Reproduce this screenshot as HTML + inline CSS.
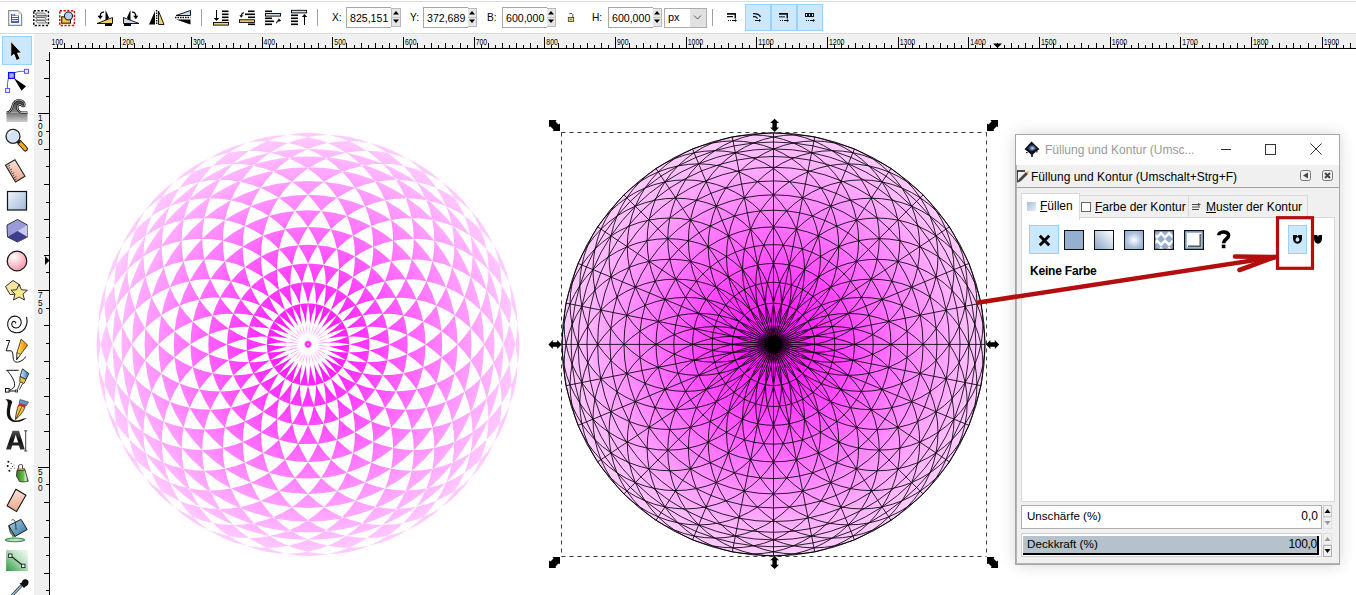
<!DOCTYPE html>
<html><head><meta charset="utf-8"><style>
body{margin:0;width:1356px;height:595px;overflow:hidden;background:#fff;font-family:"Liberation Sans",sans-serif;position:relative}
.a{position:absolute}
svg{position:absolute;left:0;top:0}
.t{position:absolute;white-space:nowrap;font-family:"Liberation Sans",sans-serif;color:#000}
#dlg{position:absolute;left:1015px;top:134px;width:323px;height:429px;border:1px solid #a6a6a6;background:#f0f0f0;box-shadow:0 0 14px rgba(0,0,0,0.16)}
.btnsel{position:absolute;background:#cce8ff;border:1px solid #99d1ff;box-sizing:border-box}

</style></head><body>
<svg width="1356" height="595"><defs><radialGradient id="g1" gradientUnits="userSpaceOnUse" cx="308" cy="344.4" r="211.5"><stop offset="0" stop-color="#f0f" stop-opacity="1"/><stop offset="1" stop-color="#f0f" stop-opacity="0.2"/></radialGradient><radialGradient id="g2" gradientUnits="userSpaceOnUse" cx="773.5" cy="344.4" r="211.5"><stop offset="0" stop-color="#f0f" stop-opacity="1"/><stop offset="1" stop-color="#f0f" stop-opacity="0.2"/></radialGradient></defs><path d="M519.50 344.40a105.75 105.75 0 1 0 -211.50 0a105.75 105.75 0 1 0 211.50 0zM517.47 365.03a105.75 105.75 0 1 0 -211.50 0a105.75 105.75 0 1 0 211.50 0zM511.45 384.87a105.75 105.75 0 1 0 -211.50 0a105.75 105.75 0 1 0 211.50 0zM501.68 403.15a105.75 105.75 0 1 0 -211.50 0a105.75 105.75 0 1 0 211.50 0zM488.53 419.18a105.75 105.75 0 1 0 -211.50 0a105.75 105.75 0 1 0 211.50 0zM472.50 432.33a105.75 105.75 0 1 0 -211.50 0a105.75 105.75 0 1 0 211.50 0zM454.22 442.10a105.75 105.75 0 1 0 -211.50 0a105.75 105.75 0 1 0 211.50 0zM434.38 448.12a105.75 105.75 0 1 0 -211.50 0a105.75 105.75 0 1 0 211.50 0zM413.75 450.15a105.75 105.75 0 1 0 -211.50 0a105.75 105.75 0 1 0 211.50 0zM393.12 448.12a105.75 105.75 0 1 0 -211.50 0a105.75 105.75 0 1 0 211.50 0zM373.28 442.10a105.75 105.75 0 1 0 -211.50 0a105.75 105.75 0 1 0 211.50 0zM355.00 432.33a105.75 105.75 0 1 0 -211.50 0a105.75 105.75 0 1 0 211.50 0zM338.97 419.18a105.75 105.75 0 1 0 -211.50 0a105.75 105.75 0 1 0 211.50 0zM325.82 403.15a105.75 105.75 0 1 0 -211.50 0a105.75 105.75 0 1 0 211.50 0zM316.05 384.87a105.75 105.75 0 1 0 -211.50 0a105.75 105.75 0 1 0 211.50 0zM310.03 365.03a105.75 105.75 0 1 0 -211.50 0a105.75 105.75 0 1 0 211.50 0zM308.00 344.40a105.75 105.75 0 1 0 -211.50 0a105.75 105.75 0 1 0 211.50 0zM310.03 323.77a105.75 105.75 0 1 0 -211.50 0a105.75 105.75 0 1 0 211.50 0zM316.05 303.93a105.75 105.75 0 1 0 -211.50 0a105.75 105.75 0 1 0 211.50 0zM325.82 285.65a105.75 105.75 0 1 0 -211.50 0a105.75 105.75 0 1 0 211.50 0zM338.97 269.62a105.75 105.75 0 1 0 -211.50 0a105.75 105.75 0 1 0 211.50 0zM355.00 256.47a105.75 105.75 0 1 0 -211.50 0a105.75 105.75 0 1 0 211.50 0zM373.28 246.70a105.75 105.75 0 1 0 -211.50 0a105.75 105.75 0 1 0 211.50 0zM393.12 240.68a105.75 105.75 0 1 0 -211.50 0a105.75 105.75 0 1 0 211.50 0zM413.75 238.65a105.75 105.75 0 1 0 -211.50 0a105.75 105.75 0 1 0 211.50 0zM434.38 240.68a105.75 105.75 0 1 0 -211.50 0a105.75 105.75 0 1 0 211.50 0zM454.22 246.70a105.75 105.75 0 1 0 -211.50 0a105.75 105.75 0 1 0 211.50 0zM472.50 256.47a105.75 105.75 0 1 0 -211.50 0a105.75 105.75 0 1 0 211.50 0zM488.53 269.62a105.75 105.75 0 1 0 -211.50 0a105.75 105.75 0 1 0 211.50 0zM501.68 285.65a105.75 105.75 0 1 0 -211.50 0a105.75 105.75 0 1 0 211.50 0zM511.45 303.93a105.75 105.75 0 1 0 -211.50 0a105.75 105.75 0 1 0 211.50 0zM517.47 323.77a105.75 105.75 0 1 0 -211.50 0a105.75 105.75 0 1 0 211.50 0zM503.40 344.40a195.40 195.40 0 1 0 -390.80 0a195.40 195.40 0 1 0 390.80 0zM494.53 344.40a186.53 186.53 0 1 0 -373.05 0a186.53 186.53 0 1 0 373.05 0zM483.86 344.40a175.86 175.86 0 1 0 -351.71 0a175.86 175.86 0 1 0 351.71 0zM471.49 344.40a163.49 163.49 0 1 0 -326.98 0a163.49 163.49 0 1 0 326.98 0zM457.55 344.40a149.55 149.55 0 1 0 -299.11 0a149.55 149.55 0 1 0 299.11 0zM442.17 344.40a134.17 134.17 0 1 0 -268.35 0a134.17 134.17 0 1 0 268.35 0zM425.50 344.40a117.50 117.50 0 1 0 -235.01 0a117.50 117.50 0 1 0 235.01 0zM407.70 344.40a99.70 99.70 0 1 0 -199.40 0a99.70 99.70 0 1 0 199.40 0zM388.94 344.40a80.94 80.94 0 1 0 -161.88 0a80.94 80.94 0 1 0 161.88 0zM369.40 344.40a61.40 61.40 0 1 0 -122.79 0a61.40 61.40 0 1 0 122.79 0zM349.26 344.40a41.26 41.26 0 1 0 -82.52 0a41.26 41.26 0 1 0 82.52 0z" fill="url(#g1)" fill-rule="evenodd"/><path d="M985.00 344.40a105.75 105.75 0 1 0 -211.50 0a105.75 105.75 0 1 0 211.50 0zM982.97 365.03a105.75 105.75 0 1 0 -211.50 0a105.75 105.75 0 1 0 211.50 0zM976.95 384.87a105.75 105.75 0 1 0 -211.50 0a105.75 105.75 0 1 0 211.50 0zM967.18 403.15a105.75 105.75 0 1 0 -211.50 0a105.75 105.75 0 1 0 211.50 0zM954.03 419.18a105.75 105.75 0 1 0 -211.50 0a105.75 105.75 0 1 0 211.50 0zM938.00 432.33a105.75 105.75 0 1 0 -211.50 0a105.75 105.75 0 1 0 211.50 0zM919.72 442.10a105.75 105.75 0 1 0 -211.50 0a105.75 105.75 0 1 0 211.50 0zM899.88 448.12a105.75 105.75 0 1 0 -211.50 0a105.75 105.75 0 1 0 211.50 0zM879.25 450.15a105.75 105.75 0 1 0 -211.50 0a105.75 105.75 0 1 0 211.50 0zM858.62 448.12a105.75 105.75 0 1 0 -211.50 0a105.75 105.75 0 1 0 211.50 0zM838.78 442.10a105.75 105.75 0 1 0 -211.50 0a105.75 105.75 0 1 0 211.50 0zM820.50 432.33a105.75 105.75 0 1 0 -211.50 0a105.75 105.75 0 1 0 211.50 0zM804.47 419.18a105.75 105.75 0 1 0 -211.50 0a105.75 105.75 0 1 0 211.50 0zM791.32 403.15a105.75 105.75 0 1 0 -211.50 0a105.75 105.75 0 1 0 211.50 0zM781.55 384.87a105.75 105.75 0 1 0 -211.50 0a105.75 105.75 0 1 0 211.50 0zM775.53 365.03a105.75 105.75 0 1 0 -211.50 0a105.75 105.75 0 1 0 211.50 0zM773.50 344.40a105.75 105.75 0 1 0 -211.50 0a105.75 105.75 0 1 0 211.50 0zM775.53 323.77a105.75 105.75 0 1 0 -211.50 0a105.75 105.75 0 1 0 211.50 0zM781.55 303.93a105.75 105.75 0 1 0 -211.50 0a105.75 105.75 0 1 0 211.50 0zM791.32 285.65a105.75 105.75 0 1 0 -211.50 0a105.75 105.75 0 1 0 211.50 0zM804.47 269.62a105.75 105.75 0 1 0 -211.50 0a105.75 105.75 0 1 0 211.50 0zM820.50 256.47a105.75 105.75 0 1 0 -211.50 0a105.75 105.75 0 1 0 211.50 0zM838.78 246.70a105.75 105.75 0 1 0 -211.50 0a105.75 105.75 0 1 0 211.50 0zM858.62 240.68a105.75 105.75 0 1 0 -211.50 0a105.75 105.75 0 1 0 211.50 0zM879.25 238.65a105.75 105.75 0 1 0 -211.50 0a105.75 105.75 0 1 0 211.50 0zM899.88 240.68a105.75 105.75 0 1 0 -211.50 0a105.75 105.75 0 1 0 211.50 0zM919.72 246.70a105.75 105.75 0 1 0 -211.50 0a105.75 105.75 0 1 0 211.50 0zM938.00 256.47a105.75 105.75 0 1 0 -211.50 0a105.75 105.75 0 1 0 211.50 0zM954.03 269.62a105.75 105.75 0 1 0 -211.50 0a105.75 105.75 0 1 0 211.50 0zM967.18 285.65a105.75 105.75 0 1 0 -211.50 0a105.75 105.75 0 1 0 211.50 0zM976.95 303.93a105.75 105.75 0 1 0 -211.50 0a105.75 105.75 0 1 0 211.50 0zM982.97 323.77a105.75 105.75 0 1 0 -211.50 0a105.75 105.75 0 1 0 211.50 0zM985.00 344.40a211.50 211.50 0 1 0 -423.00 0a211.50 211.50 0 1 0 423.00 0zM975.89 344.40a202.39 202.39 0 1 0 -404.79 0a202.39 202.39 0 1 0 404.79 0zM968.90 344.40a195.40 195.40 0 1 0 -390.80 0a195.40 195.40 0 1 0 390.80 0zM960.03 344.40a186.53 186.53 0 1 0 -373.05 0a186.53 186.53 0 1 0 373.05 0zM949.36 344.40a175.86 175.86 0 1 0 -351.71 0a175.86 175.86 0 1 0 351.71 0zM936.99 344.40a163.49 163.49 0 1 0 -326.98 0a163.49 163.49 0 1 0 326.98 0zM923.05 344.40a149.55 149.55 0 1 0 -299.11 0a149.55 149.55 0 1 0 299.11 0zM907.67 344.40a134.17 134.17 0 1 0 -268.35 0a134.17 134.17 0 1 0 268.35 0zM891.00 344.40a117.50 117.50 0 1 0 -235.01 0a117.50 117.50 0 1 0 235.01 0zM873.20 344.40a99.70 99.70 0 1 0 -199.40 0a99.70 99.70 0 1 0 199.40 0zM854.44 344.40a80.94 80.94 0 1 0 -161.88 0a80.94 80.94 0 1 0 161.88 0zM834.90 344.40a61.40 61.40 0 1 0 -122.79 0a61.40 61.40 0 1 0 122.79 0zM814.76 344.40a41.26 41.26 0 1 0 -82.52 0a41.26 41.26 0 1 0 82.52 0zM985.00 344.40L562.00 344.40M980.94 385.66L566.06 303.14M968.90 425.34L578.10 263.46M949.36 461.90L597.64 226.90M923.05 493.95L623.95 194.85M891.00 520.26L656.00 168.54M854.44 539.80L692.56 149.00M814.76 551.84L732.24 136.96M773.50 555.90L773.50 132.90M732.24 551.84L814.76 136.96M692.56 539.80L854.44 149.00M656.00 520.26L891.00 168.54M623.95 493.95L923.05 194.85M597.64 461.90L949.36 226.90M578.10 425.34L968.90 263.46M566.06 385.66L980.94 303.14" fill="url(#g2)" stroke="#000" stroke-width="0.85"/><defs><radialGradient id="blob"><stop offset="0.6" stop-color="#000"/><stop offset="1" stop-color="#000" stop-opacity="0"/></radialGradient></defs><circle cx="773.5" cy="344.4" r="11" fill="url(#blob)"/><defs><radialGradient id="wc"><stop offset="0.45" stop-color="#fff"/><stop offset="1" stop-color="#fff" stop-opacity="0"/></radialGradient><radialGradient id="mc"><stop offset="0" stop-color="#f0f" stop-opacity="0.35"/><stop offset="0.55" stop-color="#f0f" stop-opacity="0.95"/><stop offset="1" stop-color="#f0f" stop-opacity="0"/></radialGradient></defs><circle cx="308" cy="344.2" r="21" fill="url(#wc)"/><circle cx="308" cy="344.2" r="4.2" fill="url(#mc)"/><g fill="none" stroke="#3a3a3a" stroke-width="1" stroke-dasharray="4 4"><path d="M561.5 132.5H986.5"/><path d="M561.5 556.5H986.5"/><path d="M561.5 132.5V556.5"/><path d="M986.5 132.5V556.5"/></g>
<g fill="#000">
<path d="M-2 -5.5H5.5V1.5L4 1L1 4L1.5 5.5H-5.5V-2L-4 -1L-1 -4Z" transform="translate(992.5 125.5)"/>
<path d="M-2 -5.5H5.5V1.5L4 1L1 4L1.5 5.5H-5.5V-2L-4 -1L-1 -4Z" transform="translate(554.5 562.5)"/>
<path d="M-2 -5.5H5.5V1.5L4 1L1 4L1.5 5.5H-5.5V-2L-4 -1L-1 -4Z" transform="translate(554.5 125.5) scale(-1 1)"/>
<path d="M-2 -5.5H5.5V1.5L4 1L1 4L1.5 5.5H-5.5V-2L-4 -1L-1 -4Z" transform="translate(992.5 562.5) scale(-1 1)"/>
<path d="M-6.6 0L-2.2 -4.5V-2.2H2.2V-4.5L6.6 0L2.2 4.5V2.2H-2.2V4.5Z" transform="translate(774.6 125.3) rotate(90)"/>
<path d="M-6.6 0L-2.2 -4.5V-2.2H2.2V-4.5L6.6 0L2.2 4.5V2.2H-2.2V4.5Z" transform="translate(774.6 562.5) rotate(90)"/>
<path d="M-6.6 0L-2.2 -4.5V-2.2H2.2V-4.5L6.6 0L2.2 4.5V2.2H-2.2V4.5Z" transform="translate(992.6 344.5)"/>
<path d="M-6.6 0L-2.2 -4.5V-2.2H2.2V-4.5L6.6 0L2.2 4.5V2.2H-2.2V4.5Z" transform="translate(555.0 344.5)"/>
</g>
</svg>
<svg width="1356" height="595">
<rect x="0" y="0" width="1356" height="34" fill="#fff"/><rect x="0" y="1" width="1356" height="1" fill="#dcdcdc"/><rect x="0" y="33" width="1356" height="1" fill="#dcdcdc"/>
<rect x="34" y="34" width="1322" height="15" fill="#f0f0f0"/><rect x="34" y="34" width="16" height="561" fill="#f0f0f0"/><rect x="53" y="48" width="1303" height="1" fill="#000"/><rect x="49" y="52" width="1" height="543" fill="#000"/><path d="M57.5 45V48M64.5 43V48M71.5 45V48M78.5 43V48M85.5 45V48M92.5 43V48M99.5 45V48M106.5 43V48M113.5 45V48M120.5 37V48M127.5 45V48M134.5 43V48M142.5 45V48M149.5 43V48M156.5 45V48M163.5 43V48M170.5 45V48M177.5 43V48M184.5 45V48M191.5 37V48M198.5 45V48M205.5 43V48M212.5 45V48M219.5 43V48M226.5 45V48M233.5 43V48M240.5 45V48M248.5 43V48M255.5 45V48M262.5 37V48M269.5 45V48M276.5 43V48M283.5 45V48M290.5 43V48M297.5 45V48M304.5 43V48M311.5 45V48M318.5 43V48M325.5 45V48M332.5 37V48M339.5 45V48M346.5 43V48M354.5 45V48M361.5 43V48M368.5 45V48M375.5 43V48M382.5 45V48M389.5 43V48M396.5 45V48M403.5 37V48M410.5 45V48M417.5 43V48M424.5 45V48M431.5 43V48M438.5 45V48M445.5 43V48M452.5 45V48M460.5 43V48M467.5 45V48M474.5 37V48M481.5 45V48M488.5 43V48M495.5 45V48M502.5 43V48M509.5 45V48M516.5 43V48M523.5 45V48M530.5 43V48M537.5 45V48M544.5 37V48M551.5 45V48M558.5 43V48M566.5 45V48M573.5 43V48M580.5 45V48M587.5 43V48M594.5 45V48M601.5 43V48M608.5 45V48M615.5 37V48M622.5 45V48M629.5 43V48M636.5 45V48M643.5 43V48M650.5 45V48M657.5 43V48M664.5 45V48M672.5 43V48M679.5 45V48M686.5 37V48M693.5 45V48M700.5 43V48M707.5 45V48M714.5 43V48M721.5 45V48M728.5 43V48M735.5 45V48M742.5 43V48M749.5 45V48M756.5 37V48M763.5 45V48M770.5 43V48M778.5 45V48M785.5 43V48M792.5 45V48M799.5 43V48M806.5 45V48M813.5 43V48M820.5 45V48M827.5 37V48M834.5 45V48M841.5 43V48M848.5 45V48M855.5 43V48M862.5 45V48M869.5 43V48M876.5 45V48M884.5 43V48M891.5 45V48M898.5 37V48M905.5 45V48M912.5 43V48M919.5 45V48M926.5 43V48M933.5 45V48M940.5 43V48M947.5 45V48M954.5 43V48M961.5 45V48M968.5 37V48M975.5 45V48M982.5 43V48M990.5 45V48M997.5 43V48M1004.5 45V48M1011.5 43V48M1018.5 45V48M1025.5 43V48M1032.5 45V48M1039.5 37V48M1046.5 45V48M1053.5 43V48M1060.5 45V48M1067.5 43V48M1074.5 45V48M1081.5 43V48M1088.5 45V48M1096.5 43V48M1103.5 45V48M1110.5 37V48M1117.5 45V48M1124.5 43V48M1131.5 45V48M1138.5 43V48M1145.5 45V48M1152.5 43V48M1159.5 45V48M1166.5 43V48M1173.5 45V48M1180.5 37V48M1187.5 45V48M1194.5 43V48M1202.5 45V48M1209.5 43V48M1216.5 45V48M1223.5 43V48M1230.5 45V48M1237.5 43V48M1244.5 45V48M1251.5 37V48M1258.5 45V48M1265.5 43V48M1272.5 45V48M1279.5 43V48M1286.5 45V48M1293.5 43V48M1300.5 45V48M1308.5 43V48M1315.5 45V48M1322.5 37V48M1329.5 45V48M1336.5 43V48M1343.5 45V48M1350.5 43V48" stroke="#000" stroke-width="1"/><g font-family="Liberation Sans" font-size="8.3" fill="#000"><text x="51.6" y="45" textLength="11.5" lengthAdjust="spacingAndGlyphs">100</text><text x="122.3" y="45" textLength="11.5" lengthAdjust="spacingAndGlyphs">200</text><text x="193.0" y="45" textLength="11.5" lengthAdjust="spacingAndGlyphs">300</text><text x="263.6" y="45" textLength="11.5" lengthAdjust="spacingAndGlyphs">400</text><text x="334.3" y="45" textLength="11.5" lengthAdjust="spacingAndGlyphs">500</text><text x="405.0" y="45" textLength="11.5" lengthAdjust="spacingAndGlyphs">600</text><text x="475.7" y="45" textLength="11.5" lengthAdjust="spacingAndGlyphs">700</text><text x="546.3" y="45" textLength="11.5" lengthAdjust="spacingAndGlyphs">800</text><text x="617.0" y="45" textLength="11.5" lengthAdjust="spacingAndGlyphs">900</text><text x="687.7" y="45" textLength="15.5" lengthAdjust="spacingAndGlyphs">1000</text><text x="758.3" y="45" textLength="15.5" lengthAdjust="spacingAndGlyphs">1100</text><text x="829.0" y="45" textLength="15.5" lengthAdjust="spacingAndGlyphs">1200</text><text x="899.7" y="45" textLength="15.5" lengthAdjust="spacingAndGlyphs">1300</text><text x="970.3" y="45" textLength="15.5" lengthAdjust="spacingAndGlyphs">1400</text><text x="1041.0" y="45" textLength="15.5" lengthAdjust="spacingAndGlyphs">1500</text><text x="1111.7" y="45" textLength="15.5" lengthAdjust="spacingAndGlyphs">1600</text><text x="1182.3" y="45" textLength="15.5" lengthAdjust="spacingAndGlyphs">1700</text><text x="1253.0" y="45" textLength="15.5" lengthAdjust="spacingAndGlyphs">1800</text><text x="1323.7" y="45" textLength="15.5" lengthAdjust="spacingAndGlyphs">1900</text></g><path d="M46 60.5H49M44 78.5H49M46 96.5H49M38 113.5H49M46 131.5H49M44 149.5H49M46 166.5H49M44 184.5H49M46 202.5H49M44 219.5H49M46 237.5H49M44 255.5H49M46 272.5H49M38 290.5H49M46 308.5H49M44 325.5H49M46 343.5H49M44 361.5H49M46 378.5H49M44 396.5H49M46 414.5H49M44 431.5H49M46 449.5H49M38 467.5H49M46 484.5H49M44 502.5H49M46 520.5H49M44 537.5H49M46 555.5H49M44 573.5H49M46 590.5H49" stroke="#000" stroke-width="1"/><g font-family="Liberation Sans" font-size="8.3" fill="#000"><text x="40.2" y="121.4" text-anchor="middle">1</text><text x="40.2" y="129.4" text-anchor="middle">0</text><text x="40.2" y="137.4" text-anchor="middle">0</text><text x="40.2" y="145.4" text-anchor="middle">0</text><text x="40.2" y="298.1" text-anchor="middle">7</text><text x="40.2" y="306.1" text-anchor="middle">5</text><text x="40.2" y="314.1" text-anchor="middle">0</text><text x="40.2" y="474.8" text-anchor="middle">5</text><text x="40.2" y="482.8" text-anchor="middle">0</text><text x="40.2" y="490.8" text-anchor="middle">0</text></g><path d="M993 43.5H1002L997.5 48Z" fill="#000"/><path d="M45 256V265L49.5 260.5Z" fill="#000"/><g id="spin">
<rect x="391.5" y="8.5" width="9" height="18" fill="#e6e6e6" stroke="#b9b9b9"/><path d="M391.5 17.5H400.5" stroke="#c8c8c8"/><path d="M393 14.5H399L396 11Z M393 19.5H399L396 23Z" fill="#000"/>
</g>
<use href="#spin" x="76"/><use href="#spin" x="155"/><use href="#spin" x="261"/>
<rect x="85" y="9" width="1" height="17" fill="#a0a0a0"/><rect x="201" y="9" width="1" height="17" fill="#a0a0a0"/><rect x="317" y="9" width="1" height="17" fill="#a0a0a0"/><rect x="712" y="9" width="1" height="17" fill="#a0a0a0"/>
<rect x="745.5" y="4.5" width="77" height="26" fill="#cce8ff" stroke="#99d1ff"/><path d="M771 5V30M797 5V30" stroke="#99d1ff" stroke-width="2"/>
<!-- lock -->
<path d="M569 14.2C570 13 572 13 572.8 14.5V17.3" stroke="#444" stroke-width="0.9" fill="none"/><rect x="568.3" y="17.5" width="5.4" height="4" fill="#e8dc80" stroke="#333" stroke-width="0.8"/><rect x="570.3" y="18.8" width="1.2" height="1.2" fill="#444"/>
<!-- right small icons -->
<g fill="#111">
<path d="M727 13H736V18.5H734.5V14.8H727Z"/><path d="M727 16H733V17.2H727Z"/><path d="M728 20H729V21H728ZM730 20H731V21H730ZM732 20H735V19L737 20.5L735 22V21H732Z"/>
<path d="M753 13C757 13 760 13.5 761 17L759.8 17.3C759 15 757 14.3 753 14.3Z" /><path d="M753 16C755.5 16 757.5 16.3 758 18.5L757 18.7C756.5 17.3 755 17.2 753 17.2Z"/><path d="M755 20H759V19L761 20.5L759 22V21H755Z"/>
<path d="M779 13H788V18.5H786.5V14.8H779Z"/><path d="M779 16H785V17.5H779Z" fill="#555"/><path d="M780 20H781V21H780ZM782 20H783V21H782ZM784 20H787V19L789 20.5L787 22V21H784Z"/>
<path d="M805 13H814V17H805Z"/><path d="M806 14H807V16H806ZM809 14H810V16H809ZM812 14H813V16H812Z" fill="#cce8ff"/><path d="M806 20H807V21H806ZM808 20H809V21H808ZM810 20H813V19L815 20.5L813 22V21H810Z"/>
</g>
<!-- document icon -->
<path d="M8.7 10.7H17.8L21.6 14.5V25.3H8.7Z" fill="#fdfdfd" stroke="#8c8c8c" stroke-width="1.2"/><path d="M17.8 10.7V14.5H21.6Z" fill="#e4e4e4"/>
<path d="M11 14H15.2V15.6H18.9V22.9H11Z" fill="#2f62b5"/><path d="M12 16.5H18M12 18.5H18M12 20.6H18" stroke="#fff" stroke-width="1"/><path d="M12 14.9H14.4" stroke="#fff" stroke-width="0.8"/>
<!-- select all in all layers -->
<rect x="33.8" y="10.8" width="14.6" height="14.6" fill="none" stroke="#111" stroke-width="1.5" stroke-dasharray="2.2 1.5"/>
<g stroke="#555" stroke-width="0.8"><path d="M35.5 20.5H44.5L46.8 23H37.5Z" fill="#e8e8e8"/><path d="M35.5 17.5H44.5L46.8 20H37.5Z" fill="#f0f0f0"/><path d="M35.5 14.5H44.5L46.8 17H37.5Z" fill="#f6f6f6"/><path d="M35.5 13H44.5L46.8 15.5H37.5Z" fill="#ddd"/></g>
<!-- select same -->
<rect x="59.8" y="10.8" width="14.6" height="14.6" fill="none" stroke="#d00" stroke-width="1.5" stroke-dasharray="2.2 1.5"/>
<rect x="61.7" y="16.8" width="8.8" height="6.4" fill="#f8c838" stroke="#222" stroke-width="1.1"/><circle cx="68.5" cy="16" r="4" fill="#b7cfe9" stroke="#222" stroke-width="1.1"/>
<!-- rotate ccw -->
<path d="M105.5 10L109 17.5L105.5 23Z" fill="#000"/><path d="M97 23.5L112.5 17.5V23.5Z" fill="#f6d36a" stroke="#000" stroke-width="0.9"/><rect x="105" y="23.5" width="7" height="2.5" fill="#000"/>
<path d="M104 12.2C101.5 12 100.2 13.5 100.2 16.5" stroke="#000" stroke-width="1.3" fill="none"/><path d="M97.6 15.8H102.8L100.2 19.3Z" fill="#000"/>
<!-- rotate cw -->
<path d="M130.5 10L127 17.5L130.5 23Z" fill="#000"/><path d="M139 23.5L123.5 17.5V23.5Z" fill="#c9dcf0" stroke="#000" stroke-width="0.9"/><rect x="124" y="23.5" width="7" height="2.5" fill="#000"/>
<path d="M132 12.2C134.5 12 135.8 13.5 135.8 16.5" stroke="#000" stroke-width="1.3" fill="none"/><path d="M133.2 15.8H138.4L135.8 19.3Z" fill="#000"/>
<!-- flip h -->
<path d="M155 11V24.5H149Z" fill="#000"/><path d="M158.5 11V24.5H164Z" fill="#f6d36a" stroke="#000" stroke-width="0.9"/><path d="M156.7 10V25" stroke="#000" stroke-width="1.3" stroke-dasharray="1.5 1"/>
<!-- flip v -->
<path d="M176 15.5L190.5 10.5V15.5Z" fill="#c9dcf0" stroke="#000" stroke-width="0.9"/><path d="M176 19.5H190.5V24.5Z" fill="#000"/><path d="M175 17.5H190.5" stroke="#000" stroke-width="1.3" stroke-dasharray="1.5 1"/>
<!-- z-order -->
<g fill="#000">
<path d="M216 10H217V19H216Z"/><path d="M213.8 18H219.2L216.5 21Z"/>
<rect x="222" y="10.5" width="6.5" height="1.6"/><rect x="222" y="13.5" width="6.5" height="1.6"/><rect x="222" y="16.5" width="6.5" height="1.6"/><rect x="222" y="19.5" width="6.5" height="1.6"/>
<rect x="239" y="10.5" width="6.5" height="1.6" transform="translate(9 0)"/><rect x="245" y="13.5" width="10" height="1.6"/><rect x="248" y="16.5" width="7" height="1.6"/><rect x="248" y="23.5" width="7" height="1.6"/>
<path d="M244 12.8C242.3 13 241.5 14 241.3 15.6" stroke="#000" stroke-width="1.1" fill="none"/><path d="M239.4 15.2H243.2L241.2 17.8Z"/>
<rect x="265" y="10.5" width="7" height="1.6"/><rect x="265" y="17.5" width="7" height="1.6"/><rect x="265" y="20.5" width="9" height="1.6"/><rect x="265" y="23.5" width="7" height="1.6"/>
<path d="M276.5 23.2C276.7 21.5 277.5 20.5 279 20.2" stroke="#000" stroke-width="1.1" fill="none"/><path d="M278.5 18.3L281.2 20.4L278.3 22Z"/>
<rect x="291" y="14.5" width="7" height="1.6"/><rect x="291" y="17.5" width="7" height="1.6"/><rect x="291" y="20.5" width="7" height="1.6"/><rect x="291" y="23.5" width="7" height="1.6"/>
<path d="M304 16H305V25H304Z"/><path d="M301.8 17H307.2L304.5 14Z"/>
</g>
<rect x="213.5" y="22.5" width="15" height="2.6" fill="#f6d36a" stroke="#000" stroke-width="0.9"/>
<rect x="239.5" y="19.8" width="15" height="2.6" fill="#f6d36a" stroke="#000" stroke-width="0.9"/>
<rect x="265.5" y="13.5" width="15" height="2.6" fill="#c9dcf0" stroke="#000" stroke-width="0.9"/>
<rect x="291.5" y="10.3" width="15" height="2.6" fill="#c9dcf0" stroke="#000" stroke-width="0.9"/>
<defs>
<linearGradient id="tg1" x1="0" y1="0" x2="1" y2="1"><stop offset="0" stop-color="#f2f6fb"/><stop offset="1" stop-color="#9db8d8"/></linearGradient>
<linearGradient id="tg2" x1="0" y1="0" x2="0" y2="1"><stop offset="0" stop-color="#e8e8e8"/><stop offset="1" stop-color="#888"/></linearGradient>
<radialGradient id="tg3" cx="0.35" cy="0.3" r="0.8"><stop offset="0" stop-color="#fff"/><stop offset="1" stop-color="#f48ea0"/></radialGradient>
<linearGradient id="tg4" x1="0" y1="0" x2="1" y2="1"><stop offset="0" stop-color="#cfe8cf"/><stop offset="1" stop-color="#3aa04a"/></linearGradient>
</defs>
<rect x="2.5" y="36.5" width="29" height="28" fill="#cce8ff" stroke="#99d1ff"/>
<!-- arrow -->
<path d="M10.8 41.3V57.1L14 54.3L16.4 60.5L20.1 58.9L17.5 53H21.6Z" fill="#000" stroke="#fff" stroke-width="0.8" stroke-linejoin="round"/>
<!-- node -->
<path d="M14.6 73C17 71.5 20 71.2 24.2 71.3M8.2 79C7.5 82 7.3 85 7.4 88.2" stroke="#555" stroke-width="0.9" fill="none"/>
<rect x="8.6" y="72.6" width="5.8" height="5.8" fill="#a8a8ff" stroke="#1010f0" stroke-width="1.3"/>
<rect x="24.5" y="69.3" width="4" height="4" fill="#e8e8ff" stroke="#5a5af5" stroke-width="1"/><rect x="5.6" y="88.5" width="4" height="4" fill="#e8e8ff" stroke="#5a5af5" stroke-width="1"/>
<path d="M13.9 78.1L26 86.2L21.5 90.8Z" fill="#000"/>
<!-- tweak -->
<defs><linearGradient id="tg5" x1="0" y1="0" x2="0" y2="1"><stop offset="0" stop-color="#707070"/><stop offset="1" stop-color="#cfcfcf"/></linearGradient><linearGradient id="tg6" x1="0" y1="0" x2="0" y2="1"><stop offset="0" stop-color="#3a3a3a"/><stop offset="1" stop-color="#8a8a8a"/></linearGradient></defs>
<rect x="6.5" y="112.5" width="21" height="9.5" fill="url(#tg5)"/>
<path d="M6.5 112.5C10 112.5 11.5 110 12.5 106C13.5 102 16 100 19 100C22 100 24.5 102 24.5 104.5C24.5 106 23.5 106.5 22.5 106C21 104 18 104 17.5 106.5C17 109 18.5 112.5 22 112.5H27.5Z" fill="url(#tg6)"/>
<path d="M6.5 112.5C10 112.5 11.5 110 12.5 106C13.5 102 16 100 19 100C22 100 24.5 102 24.5 104.5C24.5 106 23.5 106.5 22.5 106C21 104 18 104 17.5 106.5C17 109 18.5 112.5 22 112.5H27.5" fill="none" stroke="#111" stroke-width="2.2"/>
<path d="M6.5 112.5C10 112.5 11.5 110 12.5 106C13.5 102 16 100 19 100C22 100 24.5 102 24.5 104.5C24.5 106 23.5 106.5 22.5 106C21 104 18 104 17.5 106.5C17 109 18.5 112.5 22 112.5H27.5" fill="none" stroke="#fff" stroke-width="0.7"/>
<!-- zoom -->
<path d="M19.5 142.5L25.5 149" stroke="#222" stroke-width="5" stroke-linecap="round"/><path d="M19.8 142.8L25.2 148.7" stroke="#f5a818" stroke-width="3.2" stroke-linecap="round"/>
<path d="M17.5 140.5L19.8 143" stroke="#222" stroke-width="3"/>
<circle cx="13" cy="136.3" r="7" fill="#d3e3f3" stroke="#222" stroke-width="1.3"/><path d="M9 133.5C10 131.5 12 130.5 14 130.8" stroke="#fff" stroke-width="1.2" fill="none"/>
<!-- measure -->
<path d="M5.5 165.2L15 159.8L25 176.3L15.5 182Z" fill="url(#tg11)" stroke="#222" stroke-width="1.1"/>
<path d="M7.3 166.6L10 165M8.3 168.5L10 167.5M9.3 170.4L12 168.8M10.4 172.3L12.1 171.3M11.5 174.2L14.2 172.6M12.6 176.1L14.3 175.1M13.7 178L16.4 176.4M14.8 179.9L16.5 178.9" stroke="#333" stroke-width="0.8"/>
<!-- rect -->
<rect x="7.5" y="191.5" width="19" height="18.5" fill="url(#tg1)" stroke="#111" stroke-width="1.2"/>
<!-- 3d box -->
<path d="M7 225L17.5 219.5L27.5 225V237L17.5 242L7.5 237Z" fill="#9a9ad8" stroke="#333" stroke-width="1"/>
<path d="M17.5 231L27.5 225V237L17.5 242Z" fill="#c8c8f0"/><path d="M7.5 237L17.5 231L27.5 237L17.5 242Z" fill="#3d3d90"/>
<!-- ellipse -->
<circle cx="17" cy="261" r="9.8" fill="url(#tg3)" stroke="#111" stroke-width="1.2"/>
<!-- star -->
<path d="M5.5 286.5L13 280.5L20 285L18 294L10 294.5Z" fill="#f5e7a0" stroke="#333" stroke-width="1"/>
<path d="M19 284.5L21.5 289.8L27.5 290.2L23 294L24.5 300L19 297L13.5 300L15 294L11 290.2L16.5 289.8Z" fill="#f8e889" stroke="#333" stroke-width="1"/>
<!-- spiral -->
<path d="M15.5 323.5C16.5 322 14 320.5 12.5 322C10.5 324.5 12.5 328 16 328C20 328 22 324 21 320.5C20 316.5 15 315 11.5 317C7.5 319.5 6.5 325 9 329C11.5 333 18 334 22.5 331C26.5 328 28 322 26.5 317" stroke="#111" stroke-width="1.1" fill="none"/>
<!-- pencil -->
<defs><linearGradient id="tg7" x1="0" y1="0" x2="1" y2="0"><stop offset="0" stop-color="#fff27a"/><stop offset="0.5" stop-color="#ffb020"/><stop offset="1" stop-color="#e07a00"/></linearGradient><linearGradient id="tg8" x1="0" y1="0" x2="1" y2="0"><stop offset="0" stop-color="#d7f0ff"/><stop offset="0.5" stop-color="#7fb5d8"/><stop offset="1" stop-color="#3b6f99"/></linearGradient></defs>
<path d="M6 340.5H9.6L6.2 350.8H11.4C12.8 352 13 355 13.2 358C13.6 362 16 362.6 18.5 362C22 361 24.5 359 25.7 356.5" stroke="#111" stroke-width="1" fill="none"/>
<path d="M21.2 339L27.7 345.2L20.5 354.5L16.6 359.7L17 352.5Z" fill="url(#tg7)" stroke="#222" stroke-width="0.8"/>
<path d="M17 352.5C18.5 353.5 19.8 354.2 20.5 354.5L16.6 359.7Z" fill="#fff0c0" stroke="#222" stroke-width="0.7"/><path d="M17.4 357.2L18.6 358L16.6 359.7Z" fill="#111"/>
<!-- pen -->
<path d="M6.5 370.3H18.7M7 370.3C10 374 15 380 14.6 385.4C14.3 388 12.5 389 9 390.5M9.2 391H16.6" stroke="#111" stroke-width="1" fill="none"/>
<rect x="5.5" y="388.5" width="3.6" height="3.6" fill="#fff" stroke="#111" stroke-width="1"/><rect x="15.6" y="390" width="2" height="2" fill="#fff" stroke="#111" stroke-width="0.8"/>
<path d="M22.5 368.8L28.8 373.5L26 379.5L20 376.5Z" fill="url(#tg8)" stroke="#222" stroke-width="0.9"/>
<path d="M20 376.5L26 379.5L24 383.5L19.7 381.5Z" fill="#f2c040" stroke="#222" stroke-width="0.8"/>
<path d="M20.3 382L17.6 389.3M22.8 383.2L19.4 389.8" stroke="#333" stroke-width="0.9"/>
<!-- calligraphy -->
<path d="M5.5 399.5C8.5 399 11.5 400 12.3 402C11 405 9.8 409 10 413C10.2 417 12 420 15.5 420.5C19 421 22 418 27.2 418.2C24 419.5 20 422.5 15 422C9 421.5 6.5 417 6.8 412C7 407 8.5 404 7.5 401.5C7 400.5 6.2 400 5.5 399.5Z" fill="#111"/>
<path d="M18.6 405L24.8 407.2C23.8 411 20 416 15.4 419.6C15.8 414 17 409 18.6 405Z" fill="#f2c23a" stroke="#222" stroke-width="0.8"/><path d="M21.5 407.5L16.2 418.5" stroke="#222" stroke-width="0.7"/>
<path d="M20 399.5L28.5 402L26.5 405.5L19 403.5Z" fill="#5a9bc8" stroke="#333" stroke-width="0.6"/><path d="M19.2 403.5L26.5 405.5L24.8 407.2L18.6 405Z" fill="#d42020"/>
<!-- text -->
<defs><linearGradient id="tg9" x1="0" y1="0" x2="0" y2="1"><stop offset="0" stop-color="#555"/><stop offset="0.5" stop-color="#111"/><stop offset="1" stop-color="#333"/></linearGradient></defs>
<path d="M6 449.5L12.6 430.8H19L24.8 449.5H20.2L19 445.5H12.2L11 449.5ZM13.2 442.4H18.2L15.7 434.8Z" fill="url(#tg9)" fill-rule="evenodd"/>
<path d="M24.2 430.8H27.2M25.7 430.8V451M24.2 451H27.2" stroke="#111" stroke-width="0.8"/>
<!-- spray -->
<circle cx="8.4" cy="461.8" r="1" fill="#111"/><circle cx="7.7" cy="465.9" r="1" fill="#111"/><circle cx="9.4" cy="470.8" r="1" fill="#111"/><circle cx="11.2" cy="463.5" r="0.6" fill="#333"/><circle cx="12.5" cy="466.5" r="0.6" fill="#333"/><circle cx="11" cy="468.5" r="0.6" fill="#333"/><circle cx="14" cy="465" r="0.5" fill="#555"/><circle cx="14.5" cy="468" r="0.5" fill="#555"/>
<defs><linearGradient id="tg10" x1="0" y1="0" x2="1" y2="0"><stop offset="0" stop-color="#2f7d1f"/><stop offset="0.6" stop-color="#6cc04a"/><stop offset="0.8" stop-color="#d8f5c8"/><stop offset="1" stop-color="#3a8f2a"/></linearGradient><linearGradient id="tg11" x1="0" y1="0" x2="0" y2="1"><stop offset="0" stop-color="#fbe3d8"/><stop offset="1" stop-color="#eaa58c"/></linearGradient></defs>
<path d="M17 470.3L25 469.8L28.2 481.2C26 482 22.5 482 19.5 481.5L16.5 476Z" fill="url(#tg10)" stroke="#222" stroke-width="0.8"/>
<path d="M17.6 468.6H24.7V470.4H17.6Z" fill="#e8b020" stroke="#222" stroke-width="0.6"/><path d="M18.6 468.5V465.5C18.6 464.5 22.4 464.3 22.6 465.3V468.5" fill="#fff" stroke="#222" stroke-width="0.9"/>
<!-- eraser -->
<path d="M15.9 489.3L25.9 495.2L16.5 511.6L7.1 505.8Z" fill="url(#tg11)" stroke="#111" stroke-width="1.1"/>
<!-- bucket -->
<defs><linearGradient id="tg12" x1="0" y1="0" x2="1" y2="1"><stop offset="0" stop-color="#a9d3ea"/><stop offset="1" stop-color="#2f6fa0"/></linearGradient><linearGradient id="tg13" x1="0" y1="1" x2="1" y2="0"><stop offset="0" stop-color="#2e9a44"/><stop offset="0.6" stop-color="#bfe3c4"/><stop offset="1" stop-color="#f2faf2"/></linearGradient><radialGradient id="tg14"><stop offset="0" stop-color="#e8f8e8"/><stop offset="1" stop-color="#6cc47a"/></radialGradient></defs>
<ellipse cx="15" cy="539.9" rx="10" ry="1.9" fill="url(#tg14)" stroke="#2a5a30" stroke-width="0.7"/>
<path d="M12.5 535.5C13 537 13.5 538.5 13.6 539.5" stroke="#6cc47a" stroke-width="1.5"/>
<path d="M8.8 525.6L21.1 519.4L27.2 529.6L15 536.4Z" fill="url(#tg12)" stroke="#1a1a1a" stroke-width="1"/>
<path d="M8.8 525.6C10 530 12 534 15 536.4C12 536 9.5 533 8.8 525.6Z" fill="#8fd08f" stroke="#1a1a1a" stroke-width="0.7"/>
<path d="M11.5 520.2C13 519 15 520 15.5 522.5L16 528.5" stroke="#222" stroke-width="0.8" fill="none"/><circle cx="16" cy="529" r="0.9" fill="#555"/>
<!-- gradient -->
<rect x="6.1" y="550" width="21.8" height="21.1" fill="url(#tg13)"/>
<path d="M10.2 555.5L23.1 565.7" stroke="#222" stroke-width="1.1"/><rect x="8.6" y="554" width="3.4" height="3.4" fill="#eee" stroke="#222" stroke-width="0.9"/><rect x="21.6" y="564.2" width="3.4" height="3.4" fill="#eee" stroke="#222" stroke-width="0.9"/>
<!-- dropper -->
<path d="M12 595.5L21.5 585.5" stroke="#222" stroke-width="2.6"/><path d="M12 595.5L21.5 585.5" stroke="#9cc8ea" stroke-width="1.3"/>
<path d="M19.5 583.5L24 588L25.8 586.2C27.5 586 28.8 584 28.5 581.5C28 579.5 25.5 578.8 23.5 579.8C22.5 580.5 22 581.5 21.8 582.5Z" fill="#111"/>
</svg>
<div class="t" style="left:332px;top:12px;font-size:10.2px">X:</div>
<div class="t" style="left:410px;top:12px;font-size:10.2px">Y:</div>
<div class="t" style="left:487px;top:12px;font-size:10.2px">B:</div>
<div class="t" style="left:592px;top:12px;font-size:10.2px">H:</div>
<div class="a" style="left:346px;top:7px;width:44px;height:19px;border:1px solid #a8a8a8;border-right:none;background:#fff;overflow:hidden"><div class="t" style="left:3px;top:4px;font-size:10.6px">825,151</div></div>
<div class="a" style="left:423px;top:7px;width:44px;height:19px;border:1px solid #a8a8a8;border-right:none;background:#fff;overflow:hidden"><div class="t" style="left:3px;top:4px;font-size:10.6px">372,689</div></div>
<div class="a" style="left:502px;top:7px;width:44px;height:19px;border:1px solid #a8a8a8;border-right:none;background:#fff;overflow:hidden"><div class="t" style="left:3px;top:4px;font-size:10.6px">600,000</div></div>
<div class="a" style="left:608px;top:7px;width:44px;height:19px;border:1px solid #a8a8a8;border-right:none;background:#fff;overflow:hidden"><div class="t" style="left:3px;top:4px;font-size:10.6px">600,000</div></div>
<div class="a" style="left:664px;top:8px;width:41px;height:18px;border:1px solid #adadad;background:#fff"><div class="t" style="left:3px;top:2px;font-size:11px">px</div><div class="a" style="left:25px;top:0;width:16px;height:18px;background:#e1e1e1"></div></div>
<svg class="a" style="left:689px;top:13px" width="17" height="10"><path d="M5 2.5L8.5 6L12 2.5" stroke="#555" fill="none"/></svg>

<div id="dlg">
 <div class="a" style="left:0;top:0;width:323px;height:30px;background:#fff"></div>
 <svg style="left:8px;top:5px" width="18" height="18" viewBox="0 0 18 18"><defs><radialGradient id="ilg" cx="0.55" cy="0.6" r="0.5"><stop offset="0" stop-color="#cfe0f5"/><stop offset="0.5" stop-color="#3a5f95"/><stop offset="1" stop-color="#0a0a14"/></radialGradient></defs><path d="M7.5 1.5L15.5 9.2L12 11.5L9.5 13L7.5 14.5L5 12.5L0.5 9.2Z" fill="#0d0d0d"/><path d="M7.5 3.2L13.2 8.8L7.5 11.5L2.5 8.8Z" fill="url(#ilg)"/><path d="M4.5 12H11.5L8 15.5Z" fill="#111"/><rect x="2" y="12" width="1.6" height="1.2" fill="#222"/><rect x="12" y="11.2" width="1.6" height="1.2" fill="#222"/><rect x="7" y="15.2" width="2" height="1.6" fill="#111"/></svg>
 <div class="t" style="left:29px;top:8px;font-size:12px;color:#999">Füllung und Kontur (Umsc...</div>
 <div class="a" style="left:205px;top:14px;width:10px;height:1px;background:#333"></div>
 <div class="a" style="left:249px;top:9px;width:9px;height:9px;border:1px solid #333"></div>
 <svg style="left:294px;top:8px" width="12" height="12"><path d="M0.5 0.5L11.5 11.5M11.5 0.5L0.5 11.5" stroke="#333" stroke-width="1"/></svg>
 <div class="a" style="left:0;top:30px;width:323px;height:22px;background:#f0f0f0"></div>
 <div class="a" style="left:0;top:52px;width:323px;height:1px;background:#a0a0a0"></div>
 <svg style="left:0;top:35px" width="14" height="14"><path d="M1 13L3 9L10 2L12 4L5 11Z" fill="#444"/><path d="M10 2L12 4L13 1Z" fill="#f4b400"/><path d="M1 1H9M1 1V12" stroke="#111" stroke-width="1.5" fill="none"/></svg>
 <div class="t" style="left:15px;top:35px;font-size:12px">Füllung und Kontur (Umschalt+Strg+F)</div>
 <svg style="left:284px;top:35px" width="12" height="12"><rect x="0.5" y="0.5" width="10" height="10" rx="2" fill="#f0f0f0" stroke="#777"/><path d="M3 5.5L8 2.5V8.5Z" fill="#444"/></svg>
 <svg style="left:306px;top:35px" width="12" height="12"><rect x="0.5" y="0.5" width="10" height="10" rx="2" fill="#f0f0f0" stroke="#777"/><path d="M3 3L8 8M8 3L3 8" stroke="#444" stroke-width="2"/></svg>
 <!-- tabs -->
 <div class="a" style="left:5px;top:82px;width:312px;height:283px;background:#fff;border:1px solid #d9d9d9"></div>
 <div class="a" style="left:63px;top:60px;width:108px;height:21px;background:#f0f0f0;border:1px solid #d9d9d9"></div>
 <div class="a" style="left:172px;top:60px;width:118px;height:21px;background:#f0f0f0;border:1px solid #d9d9d9"></div>
 <div class="a" style="left:5px;top:58px;width:57px;height:26px;background:#fff;border:1px solid #d9d9d9;border-bottom:none"></div>
 <div class="a" style="left:11px;top:67px;width:9px;height:9px;background:linear-gradient(135deg,#a9bdd6,#e8eef6)"></div>
 <div class="t" style="left:24px;top:64px;font-size:12px"><u>F</u>üllen</div>
 <div class="a" style="left:65px;top:67px;width:8px;height:8px;border:1px solid #666;background:#fff"></div>
 <div class="t" style="left:79px;top:65px;font-size:12px"><u>F</u>arbe der Kontur</div>
 <svg style="left:176px;top:68px" width="10" height="8"><path d="M0 1.5H7M0 4H8M0 6.5H7" stroke="#444" stroke-width="1"/><path d="M6 0L9 1.5L6 3Z" fill="#444"/></svg>
 <div class="t" style="left:190px;top:65px;font-size:12px"><u>M</u>uster der Kontur</div>
 <!-- fill buttons -->
 <div class="btnsel" style="left:13px;top:90px;width:30px;height:29px"></div>
 <svg style="left:22px;top:99px" width="13" height="13"><path d="M1.8 1.8L11.2 11.2M11.2 1.8L1.8 11.2" stroke="#000" stroke-width="2.9"/></svg>
 <div class="a" style="left:48px;top:95px;width:18px;height:18px;border:1px solid #111;background:#94afd0"></div>
 <div class="a" style="left:78px;top:95px;width:18px;height:18px;border:1px solid #111;background:linear-gradient(45deg,#8ca7cb,#fff)"></div>
 <div class="a" style="left:108px;top:95px;width:18px;height:18px;border:1px solid #111;background:radial-gradient(circle,#fff 0,#a9bfdc 60%,#8fa9cc 100%)"></div>
 <svg style="left:138px;top:95px" width="20" height="20"><defs><clipPath id="pc"><rect x="1" y="1" width="18" height="18"/></clipPath></defs><rect x="0.5" y="0.5" width="19" height="19" fill="#fff"/><g clip-path="url(#pc)" fill="#94afd0"><path d="M3 -2.5L7 1.5L3 5.5L-1 1.5ZM11 -2.5L15 1.5L11 5.5L7 1.5ZM19 -2.5L23 1.5L19 5.5L15 1.5ZM-1 5L3 9L-1 13L-5 9ZM7 5L11 9L7 13L3 9ZM15 5L19 9L15 13L11 9ZM3 12.5L7 16.5L3 20.5L-1 16.5ZM11 12.5L15 16.5L11 20.5L7 16.5ZM19 12.5L23 16.5L19 20.5L15 16.5Z"/></g><rect x="0.6" y="0.6" width="18.8" height="18.8" fill="none" stroke="#111" stroke-width="1.2"/></svg>
 <svg style="left:168px;top:95px" width="20" height="20"><rect x="0.6" y="0.6" width="18.8" height="18.8" fill="#9ab8dc" stroke="#111" stroke-width="1.2"/><rect x="3" y="3" width="14" height="14" fill="#fff"/><path d="M16.2 4V16.2H4" stroke="#555" stroke-width="1.4" fill="none"/></svg>
 <svg style="left:200px;top:93px" width="16" height="22"><path d="M2.8 7.2C2.8 3.2 12.6 2.6 12.6 7.6C12.6 11 7.6 11 7.6 15.2" stroke="#000" stroke-width="3.6" fill="none"/><rect x="5.8" y="16.6" width="3.6" height="3.6" fill="#000"/></svg>
 <div class="btnsel" style="left:272px;top:90px;width:19px;height:29px"></div>
 <svg style="left:277px;top:100px" width="10" height="10"><path d="M0 0H3.6L4.5 1.6L5.4 0H9V3.6C9 6.6 7 8.7 4.5 8.7C2 8.7 0 6.6 0 3.6ZM4.5 2.2C3.4 2.2 2.6 3.6 2.6 4.8C2.6 6 3.4 6.8 4.5 6.8C5.6 6.8 6.4 6 6.4 4.8C6.4 3.6 5.6 2.2 4.5 2.2Z" fill="#000" fill-rule="evenodd"/></svg>
 <svg style="left:298px;top:100px" width="9" height="10"><path d="M0 0H3L4 1.6L5 0H8V3.6C8 6.6 6.2 8.7 4 8.7C1.8 8.7 0 6.6 0 3.6Z" fill="#000"/></svg>
 <div class="t" style="left:14px;top:129px;font-size:12px;letter-spacing:-0.2px;font-weight:bold">Keine Farbe</div>
 <!-- bottom fields -->
 <div class="a" style="left:5px;top:370px;width:299px;height:22px;background:#fff;border:1px solid #adadad"></div>
 <div class="t" style="left:11px;top:374px;font-size:11.6px">Unschärfe (%)</div>
 <div class="t" style="left:270px;top:374px;font-size:12px;width:32px;text-align:right">0,0</div>
 <svg style="left:307px;top:370px" width="10" height="24"><rect x="0.5" y="0.5" width="8" height="11" fill="#f0f0f0" stroke="#c8c8c8"/><rect x="0.5" y="12.5" width="8" height="11" fill="#f0f0f0" stroke="#e0e0e0"/><path d="M1.5 8H7.5L4.5 4Z" fill="#000"/><path d="M1.5 16H7.5L4.5 20Z" fill="#999"/></svg>
 <div class="a" style="left:5px;top:398px;width:299px;height:22px;background:#fff;border:1px solid #d0d0d0"></div>
 <div class="a" style="left:7px;top:401px;width:296px;height:19px;background:#b5c1cb;border-right:2px solid #000;border-bottom:2px solid #000;box-sizing:border-box"></div>
 <div class="t" style="left:11px;top:402px;font-size:11.7px">Deckkraft (%)</div>
 <div class="t" style="left:258px;top:402px;font-size:12px;width:43px;text-align:right;letter-spacing:-0.3px">100,0</div>
 <svg style="left:307px;top:398px" width="10" height="24"><rect x="0.5" y="0.5" width="8" height="11" fill="#f0f0f0" stroke="#e0e0e0"/><rect x="0.5" y="12.5" width="8" height="11" fill="#f0f0f0" stroke="#b0b0b0"/><path d="M1.5 8H7.5L4.5 4Z" fill="#999"/><path d="M1.5 16H7.5L4.5 20Z" fill="#000"/></svg>
 <div class="a" style="left:0;top:30px;width:1px;height:399px;background:#b4b4b4"></div>
 <div class="a" style="left:0;top:428px;width:323px;height:1px;background:#b4b4b4"></div>
</div>

<svg width="1356" height="595" style="pointer-events:none"><g stroke="#b30d0d" fill="none" stroke-linecap="round" stroke-linejoin="round">
<path d="M978.5 302.5L1275 257" stroke-width="4.6"/>
<path d="M1235 256.5L1275 257L1239.5 270" stroke-width="4.6"/>
<rect x="1277.5" y="217.7" width="35" height="50.6" stroke-width="3.2" stroke-linecap="butt" stroke-linejoin="miter"/>
</g>
</svg>
</body></html>
